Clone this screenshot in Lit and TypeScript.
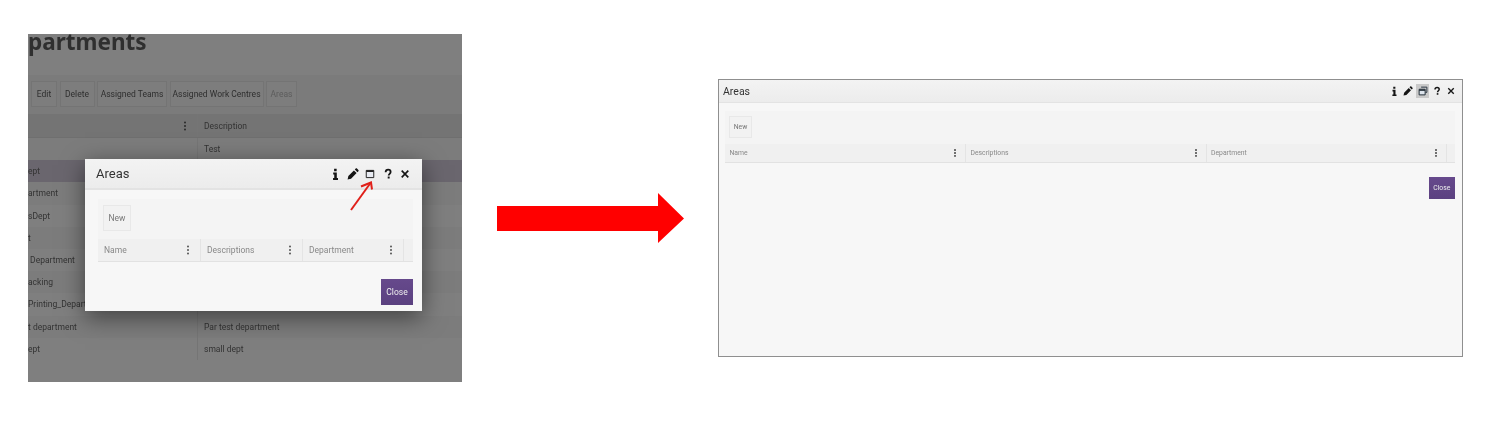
import { LitElement, html, css, svg } from "lit";
import { customElement, property } from "lit/decorators.js";

const iconInfo = svg`<path d="M9.6 1.2h3.4v3.2H9.6zM8.4 6.2h4.8v7.4h1.6v2.6H8.2v-2.6h1.6V8.8H8.4z" transform="translate(-2.8 -0.2)" fill="#151515"/>`;
const iconPencil = svg`<path d="M0.8 15.2l1-4.6 7.4-7.4 3.6 3.6-7.4 7.4zM10.4 2l1.2-1.2c.5-.5 1.2-.5 1.7 0l1.9 1.9c.5.5.5 1.2 0 1.7L14 5.6z" fill="#151515"/>`;
const iconWindow = svg`<path d="M3 3.2h10v9.6H3z" fill="#e8ebf2" stroke="#222" stroke-width="1.3"/><path d="M3 4.2h10" stroke="#222" stroke-width="2.2"/>`;
const iconRestore = svg`<path d="M5 1.8h9.2v8.4h-2.4" fill="none" stroke="#2f3a46" stroke-width="1.6"/><path d="M1.8 5.2h9.6v9H1.8z" fill="#dde4ec" stroke="#26303a" stroke-width="1.6"/><path d="M1.8 6.6h9.6" stroke="#26303a" stroke-width="2.4"/>`;
const iconHelp = svg`<path d="M4.8 5.6C4.9 3.4 6.3 2.2 8.2 2.2c2 0 3.3 1.2 3.3 3 0 2.4-2.6 2.6-2.6 4.8" fill="none" stroke="#151515" stroke-width="2.4"/><path d="M7.6 11.4h2.6V14H7.6z" fill="#151515"/>`;
const iconClose = svg`<path d="M3.6 3.6l8.8 8.8M12.4 3.6l-8.8 8.8" fill="none" stroke="#151515" stroke-width="2.2"/>`;

@customElement("area-dialog")
class AreaDialog extends LitElement {
  @property({ type: Boolean }) maximized = false;

  static styles = css`
    :host {
      display: flex;
      flex-direction: column;
      box-sizing: border-box;
      background: #f7f7f7;
      font-family: Roboto, "Noto Sans", sans-serif;
      --kebab: #555;
    }
    .head {
      display: flex;
      align-items: center;
      flex: none;
      box-sizing: border-box;
      height: var(--head-h);
      padding: 0 var(--head-pr) 0 var(--head-pl);
      background: linear-gradient(#f3f3f3, #ececec);
      border-bottom: var(--head-line) solid #e3e3e3;
    }
    .title {
      flex: 1;
      font-size: var(--title-size);
      color: #333;
    }
    .icons {
      display: flex;
      align-items: center;
      gap: var(--icon-gap);
    }
    .icon {
      display: flex;
      align-items: center;
      justify-content: center;
      width: var(--icon-box);
      height: var(--icon-box);
    }
    .icon.on {
      background: #c9c9c9;
    }
    .icon svg {
      width: var(--icon-size);
      height: var(--icon-size);
    }
    .body {
      display: flex;
      flex-direction: column;
      padding: var(--body-pt) var(--body-pr) 0 var(--body-pl);
    }
    .bar {
      display: flex;
      box-sizing: border-box;
      height: var(--bar-h);
      padding: var(--bar-pt) 0 0 var(--bar-pl);
      background: #f4f4f4;
    }
    .btn {
      display: flex;
      align-items: center;
      justify-content: center;
      box-sizing: border-box;
      width: var(--new-w);
      height: var(--new-h);
      background: #f2f2f2;
      border: 1px solid #e8e8e8;
      color: #777;
      font-size: var(--cell-size);
    }
    .cols {
      display: grid;
      grid-template-columns: var(--cols);
      height: var(--cols-h);
      box-sizing: border-box;
      background: #f0f0f0;
      border-bottom: 1px solid #e2e2e2;
    }
    .col {
      display: flex;
      align-items: center;
      justify-content: space-between;
      padding: 0 var(--kebab-pr) 0 var(--cell-pl);
      border-right: 1px solid #e4e4e4;
      color: #888;
      font-size: var(--cell-size);
      min-width: 0;
    }
    .kebab {
      width: var(--dot);
      height: var(--dot);
      border-radius: 50%;
      background: var(--kebab);
      box-shadow: 0 calc(var(--dot) * -1.8) 0 var(--kebab), 0 calc(var(--dot) * 1.8) 0 var(--kebab);
    }
    .foot {
      display: flex;
      justify-content: flex-end;
      padding-top: var(--foot-pt);
    }
    .close {
      display: flex;
      align-items: center;
      justify-content: center;
      width: var(--close-w);
      height: var(--close-h);
      background: linear-gradient(#66498c, #5b4180);
      color: #eee;
      font-size: var(--close-size);
    }
  `;

  render() {
    const icons = [
      { i: iconInfo },
      { i: iconPencil },
      { i: this.maximized ? iconRestore : iconWindow, on: this.maximized },
      { i: iconHelp },
      { i: iconClose },
    ];
    return html`
      <div class="head">
        <div class="title">Areas</div>
        <div class="icons">
          ${icons.map(
            (x) => html`<span class="icon ${x.on ? "on" : ""}"><svg viewBox="0 0 16 16">${x.i}</svg></span>`
          )}
        </div>
      </div>
      <div class="body">
        <div class="bar"><div class="btn">New</div></div>
        <div class="cols">
          ${["Name", "Descriptions", "Department"].map(
            (c) => html`<div class="col"><span>${c}</span><span class="kebab"></span></div>`
          )}
          <div></div>
        </div>
        <div class="foot"><div class="close">Close</div></div>
      </div>
    `;
  }
}

@customElement("app-root")
export class AppRoot extends LitElement {
  static styles = css`
    :host {
      display: block;
      width: 1492px;
      height: 422px;
      background: #fff;
      overflow: hidden;
      font-family: Roboto, "Noto Sans", sans-serif;
    }
    .slide {
      display: flex;
      align-items: flex-start;
      padding-left: 28px;
    }
    /* ---- left picture ---- */
    .shot {
      position: relative;
      flex: none;
      width: 434px;
      height: 348px;
      margin-top: 34px;
      background: #7f7f7f;
      overflow: hidden;
      filter: blur(0.35px);
    }
    .page-title {
      height: 41px;
      font-family: "Noto Sans", sans-serif;
      font-size: 22.5px;
      font-weight: 700;
      line-height: 16px;
      color: #2f2f2f;
    }
    .tools {
      display: flex;
      gap: 2.5px;
      box-sizing: border-box;
      height: 39px;
      padding: 6px 0 0 3px;
      background: #7b7b7b;
    }
    .tool {
      display: flex;
      align-items: center;
      justify-content: center;
      box-sizing: border-box;
      height: 26px;
      border: 1px solid #747474;
      background: #7d7d7d;
      color: #2e2e2e;
      font-size: 8.5px;
      white-space: nowrap;
    }
    .tool.off {
      color: #5c5c5c;
    }
    .thead,
    .row {
      display: grid;
      grid-template-columns: 170px 1fr;
      align-items: center;
      color: #333;
      font-size: 8.5px;
    }
    .thead {
      height: 24px;
      background: #747474;
      border-bottom: 1px solid #6f6f6f;
      box-sizing: border-box;
    }
    .row {
      height: 22.2px;
    }
    .row:nth-child(odd) {
      background: #7c7c7c;
    }
    .row.sel {
      background: #6a666e;
    }
    .namecell {
      height: 100%;
      display: flex;
      align-items: center;
      justify-content: space-between;
      padding-right: 11px;
      border-right: 1px solid #757575;
      box-sizing: border-box;
      white-space: nowrap;
      overflow: hidden;
    }
    .desc {
      padding-left: 6px;
    }
    .kebab {
      width: 2px;
      height: 2px;
      border-radius: 50%;
      background: #2a2a2a;
      box-shadow: 0 -3.4px 0 #2a2a2a, 0 3.4px 0 #2a2a2a;
    }
    .popup {
      position: absolute;
      left: 57px;
      top: 125px;
      width: 337px;
      height: 152px;
      box-shadow: 0 6px 22px rgba(0, 0, 0, 0.5);
      --head-h: 31px;
      --head-pl: 11px;
      --head-pr: 11px;
      --head-line: 2px;
      --title-size: 13px;
      --icon-gap: 5.4px;
      --icon-box: 12px;
      --icon-size: 12px;
      --body-pt: 9px;
      --body-pl: 13px;
      --body-pr: 9px;
      --bar-h: 40px;
      --bar-pt: 6px;
      --bar-pl: 5px;
      --new-w: 28px;
      --new-h: 26px;
      --cell-size: 8.5px;
      --cols: 103px 102px 101px 9px;
      --cols-h: 23px;
      --cell-pl: 6px;
      --kebab-pr: 11px;
      --dot: 2px;
      --foot-pt: 17px;
      --close-w: 32px;
      --close-h: 26px;
      --close-size: 8.5px;
    }
    .pointer {
      position: absolute;
      left: 316px;
      top: 144px;
      width: 32px;
      height: 36px;
    }
    /* ---- arrow ---- */
    .arrow {
      flex: none;
      width: 188px;
      height: 52px;
      margin: 192px 0 0 35px;
    }
    /* ---- right picture ---- */
    .full {
      flex: none;
      box-sizing: border-box;
      width: 745px;
      height: 278px;
      margin: 79px 0 0 33px;
      border: 1px solid #8f8f8f;
      filter: blur(0.3px);
      --head-h: 23px;
      --head-pl: 4px;
      --head-pr: 4px;
      --head-line: 1px;
      --title-size: 10.5px;
      --icon-gap: 1px;
      --icon-box: 13.4px;
      --icon-size: 10px;
      --body-pt: 8px;
      --body-pl: 6px;
      --body-pr: 7px;
      --bar-h: 33px;
      --bar-pt: 5px;
      --bar-pl: 4px;
      --new-w: 23px;
      --new-h: 22px;
      --cell-size: 6.8px;
      --cols: 241px 240.5px 240.5px 8px;
      --cols-h: 19px;
      --cell-pl: 4.5px;
      --kebab-pr: 9px;
      --dot: 1.6px;
      --foot-pt: 14px;
      --close-w: 26.5px;
      --close-h: 22px;
      --close-size: 6.8px;
    }
  `;

  render() {
    const rows = [
      { n: "", d: "Test" },
      { n: "ept", d: "", sel: true },
      { n: "artment", d: "" },
      { n: "sDept", d: "" },
      { n: "t", d: "" },
      { n: "\u00a0Department", d: "" },
      { n: "acking", d: "" },
      { n: "Printing_Depart", d: "" },
      { n: "t department", d: "Par test department" },
      { n: "ept", d: "small dept" },
    ];
    const tools: [string, number][] = [
      ["Edit", 26],
      ["Delete", 35],
      ["Assigned Teams", 70],
      ["Assigned Work Centres", 94],
      ["Areas", 31],
    ];
    return html`
      <div class="slide">
        <div class="shot">
          <div class="page-title">partments</div>
          <div class="tools">
            ${tools.map(
              ([t, w]) =>
                html`<div class="tool ${t === "Areas" ? "off" : ""}" style="width:${w}px">${t}</div>`
            )}
          </div>
          <div class="thead">
            <div class="namecell"><span></span><span class="kebab"></span></div>
            <div class="desc">Description</div>
          </div>
          <div>
            ${rows.map(
              (r) => html`<div class="row ${r.sel ? "sel" : ""}">
                <div class="namecell"><span>${r.n}</span></div>
                <div class="desc">${r.d}</div>
              </div>`
            )}
          </div>
          <area-dialog class="popup"></area-dialog>
          <svg class="pointer" viewBox="0 0 32 36">
            <path d="M7 32L26.5 5" stroke="#e0201a" stroke-width="2" fill="none" />
            <path d="M17 8.5L27 4.5L28 11.5" stroke="#e0201a" stroke-width="2" fill="none" />
          </svg>
        </div>
        <svg class="arrow" viewBox="0 0 188 52">
          <path d="M0 14H161V1L187 26.5L161 51V39H0z" fill="#ff0000" />
        </svg>
        <area-dialog class="full" maximized></area-dialog>
      </div>
    `;
  }
}
